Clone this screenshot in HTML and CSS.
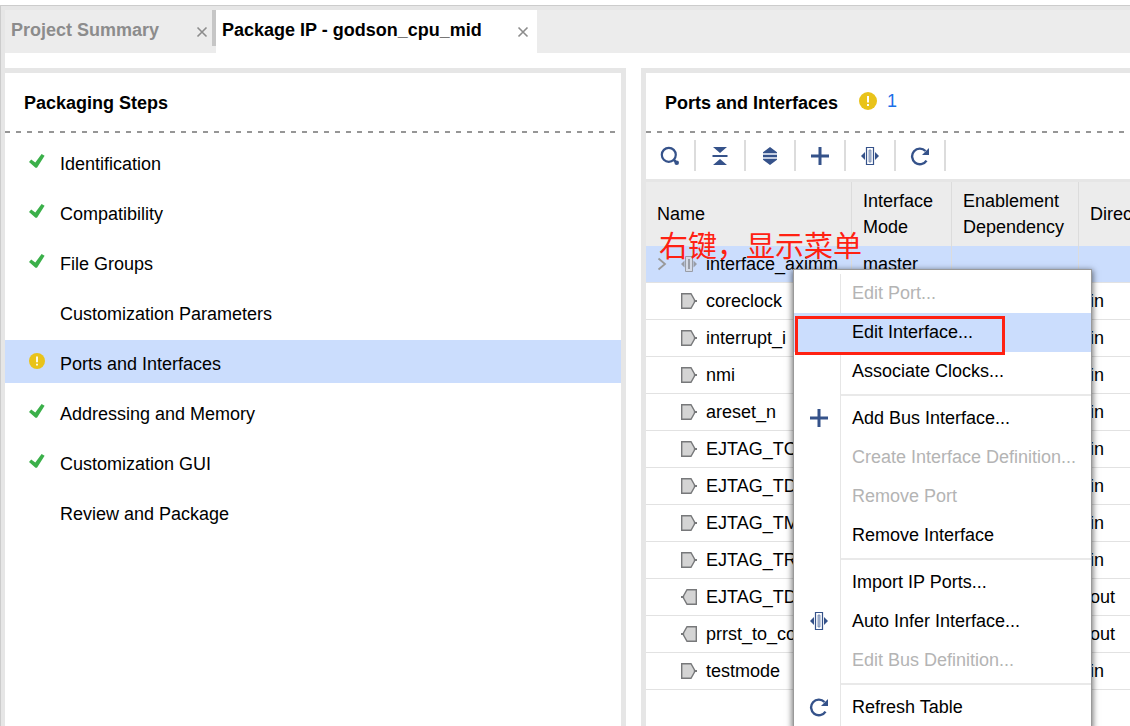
FILE: index.html
```html
<!DOCTYPE html>
<html lang="en">
<head>
<meta charset="utf-8">
<title>Package IP - godson_cpu_mid</title>
<link rel="stylesheet" href="styles.css">
</head>
<body>
<svg class="sprite" aria-hidden="true">
  <symbol id="check" viewBox="0 0 16 16"><path d="M0 9l2.200-2.400L6.300 9.500 12.600 1 15.600 2.800 8 14.800 6.500 14.800z" fill="#3bb04a"/></symbol>
  <symbol id="warn" viewBox="0 0 18 18"><circle cx="9" cy="9" r="9" fill="#e9c31a"/><path d="M8 4h2v6.500H8zM8 12h2v2H8z" fill="#fff"/></symbol>
  <symbol id="close" viewBox="0 0 12 12"><path d="M1.500 1.500l9 9M10.500 1.500l-9 9" stroke="#8c8c8c" stroke-width="1.600" fill="none"/></symbol>
  <symbol id="search" viewBox="0 0 20 20"><circle cx="8.800" cy="8.800" r="7" fill="none" stroke="#35528a" stroke-width="2.200"/><path d="M14 14l1.500 1.500" stroke="#35528a" stroke-width="2.500"/><circle cx="16.700" cy="16.700" r="2.300" fill="#35528a"/></symbol>
  <symbol id="collapse" viewBox="0 0 20 20"><path d="M3 1h14l-7 6zM3 19h14l-7-6zM2.500 9h15v2h-15z" fill="#35528a"/></symbol>
  <symbol id="expand" viewBox="0 0 20 20"><path d="M3 7h14v2H3zM3 11h14v2H3z" fill="#c3cde0"/><path d="M3 7h14v-.8L10 1 3 6.200zM3 13h14v.8L10 19l-7-5.200zM3 9h14v2H3z" fill="#35528a"/></symbol>
  <symbol id="plus" viewBox="0 0 20 20"><path d="M8.500 1h3v7.500H19v3h-7.500V19h-3v-7.500H1v-3h7.500z" fill="#35528a"/></symbol>
  <symbol id="bus" viewBox="0 0 20 20"><path d="M6.500 1.500h7v17h-7z" fill="#fff" stroke="#35528a" stroke-width="1.200"/><path d="M9 4h2v12H9z" fill="#b4c0d8" stroke="#6f85ae" stroke-width=".8"/><path d="M5 6v8l-4-4zM15 6v8l4-4z" fill="#35528a"/></symbol>
  <symbol id="bus-row" viewBox="0 0 16 16"><path d="M4.500.500h7v15h-7z" fill="#d4dae6" stroke="#999da6"/><path d="M8 3v10" stroke="#999da6" stroke-width="2"/><path d="M3.500 4.500v7L0 8zM12.500 4.500v7L16 8z" fill="#999da6"/></symbol>
  <symbol id="refresh" viewBox="0 0 20 20"><path d="M16.500 14.600A7.800 7.800 0 1 1 15.500 5" fill="none" stroke="#35528a" stroke-width="2.400"/><path d="M19 2v7h-7z" fill="#35528a"/></symbol>
  <symbol id="chevron" viewBox="0 0 10 14"><path d="M1.500 1.500L8 7l-6.500 5.500" fill="none" stroke="#999" stroke-width="1.800"/></symbol>
  <symbol id="port-in" viewBox="0 0 16 16"><path d="M.7.700H10L13.500 7v2L10 15.300H.7z" fill="#d4d4d4" stroke="#77787a" stroke-width="1.400"/><path d="M13.500 8H16" stroke="#77787a" stroke-width="2"/></symbol>
  <symbol id="port-out" viewBox="0 0 16 16"><path d="M15.300.700H6L2.500 7v2L6 15.300h9.300z" fill="#d4d4d4" stroke="#77787a" stroke-width="1.400"/><path d="M2.500 8H0" stroke="#77787a" stroke-width="2"/></symbol>
</svg>
<div class="app">
  <nav class="tabs" aria-label="Documents">
    <div class="tab"><button class="tab-name">Project Summary</button><button class="tab-close" aria-label="Close Project Summary"><svg class="i12"><use href="#close"/></svg></button></div>
    <div class="tab active"><button class="tab-name">Package IP - godson_cpu_mid</button><button class="tab-close" aria-label="Close Package IP"><svg class="i12"><use href="#close"/></svg></button></div>
  </nav>
  <main class="work">
    <section class="panel steps-panel">
      <header class="panel-head"><h2>Packaging Steps</h2></header>
      <ul class="steps">
        <li><button class="step"><svg class="i16"><use href="#check"/></svg><span>Identification</span></button></li>
        <li><button class="step"><svg class="i16"><use href="#check"/></svg><span>Compatibility</span></button></li>
        <li><button class="step"><svg class="i16"><use href="#check"/></svg><span>File Groups</span></button></li>
        <li><button class="step"><svg class="i16"></svg><span>Customization Parameters</span></button></li>
        <li><button class="step current" aria-current="step"><svg class="i16"><use href="#warn"/></svg><span>Ports and Interfaces</span></button></li>
        <li><button class="step"><svg class="i16"><use href="#check"/></svg><span>Addressing and Memory</span></button></li>
        <li><button class="step"><svg class="i16"><use href="#check"/></svg><span>Customization GUI</span></button></li>
        <li><button class="step"><svg class="i16"></svg><span>Review and Package</span></button></li>
      </ul>
    </section>
    <section class="panel ports-panel">
      <header class="panel-head"><h2>Ports and Interfaces</h2><a class="warnings" href="#warnings"><svg class="i18"><use href="#warn"/></svg>1</a></header>
      <div class="toolbar">
        <button class="tool" aria-label="Search"><svg class="i20"><use href="#search"/></svg></button>
        <button class="tool" aria-label="Collapse all"><svg class="i20"><use href="#collapse"/></svg></button>
        <button class="tool" aria-label="Expand all"><svg class="i20"><use href="#expand"/></svg></button>
        <button class="tool" aria-label="Add"><svg class="i20"><use href="#plus"/></svg></button>
        <button class="tool" aria-label="Auto infer interface"><svg class="i20"><use href="#bus"/></svg></button>
        <button class="tool" aria-label="Refresh"><svg class="i20"><use href="#refresh"/></svg></button>
      </div>
      <div class="table-wrap">
        <table class="ports">
          <colgroup><col class="c-name"><col class="c-mode"><col class="c-dep"><col class="c-dir"></colgroup>
          <thead><tr><th>Name</th><th>Interface Mode</th><th>Enablement Dependency</th><th>Direction</th></tr></thead>
          <tbody>
            <tr class="selected"><td><span class="name"><svg class="chev"><use href="#chevron"/></svg><svg class="i16"><use href="#bus-row"/></svg>interface_aximm</span></td><td>master</td><td></td><td></td></tr>
            <tr><td><span class="name"><svg class="chev"></svg><svg class="i16"><use href="#port-in"/></svg>coreclock</span></td><td></td><td></td><td>in</td></tr>
            <tr><td><span class="name"><svg class="chev"></svg><svg class="i16"><use href="#port-in"/></svg>interrupt_i</span></td><td></td><td></td><td>in</td></tr>
            <tr><td><span class="name"><svg class="chev"></svg><svg class="i16"><use href="#port-in"/></svg>nmi</span></td><td></td><td></td><td>in</td></tr>
            <tr><td><span class="name"><svg class="chev"></svg><svg class="i16"><use href="#port-in"/></svg>areset_n</span></td><td></td><td></td><td>in</td></tr>
            <tr><td><span class="name"><svg class="chev"></svg><svg class="i16"><use href="#port-in"/></svg>EJTAG_TCK</span></td><td></td><td></td><td>in</td></tr>
            <tr><td><span class="name"><svg class="chev"></svg><svg class="i16"><use href="#port-in"/></svg>EJTAG_TDI</span></td><td></td><td></td><td>in</td></tr>
            <tr><td><span class="name"><svg class="chev"></svg><svg class="i16"><use href="#port-in"/></svg>EJTAG_TMS</span></td><td></td><td></td><td>in</td></tr>
            <tr><td><span class="name"><svg class="chev"></svg><svg class="i16"><use href="#port-in"/></svg>EJTAG_TRST</span></td><td></td><td></td><td>in</td></tr>
            <tr><td><span class="name"><svg class="chev"></svg><svg class="i16"><use href="#port-out"/></svg>EJTAG_TDO</span></td><td></td><td></td><td>out</td></tr>
            <tr><td><span class="name"><svg class="chev"></svg><svg class="i16"><use href="#port-out"/></svg>prrst_to_core</span></td><td></td><td></td><td>out</td></tr>
            <tr><td><span class="name"><svg class="chev"></svg><svg class="i16"><use href="#port-in"/></svg>testmode</span></td><td></td><td></td><td>in</td></tr>
          </tbody>
        </table>
      </div>
      <div class="menu" role="menu">
        <div class="menu-body">
          <div class="group">
            <button class="item" role="menuitem" disabled><span class="label">Edit Port...</span></button>
            <button class="item hover" role="menuitem"><span class="label">Edit Interface...</span></button>
            <button class="item" role="menuitem"><span class="label">Associate Clocks...</span></button>
          </div>
          <div class="group">
            <button class="item" role="menuitem"><svg class="i20"><use href="#plus"/></svg><span class="label">Add Bus Interface...</span></button>
            <button class="item" role="menuitem" disabled><span class="label">Create Interface Definition...</span></button>
            <button class="item" role="menuitem" disabled><span class="label">Remove Port</span></button>
            <button class="item" role="menuitem"><span class="label">Remove Interface</span></button>
          </div>
          <div class="group">
            <button class="item" role="menuitem"><span class="label">Import IP Ports...</span></button>
            <button class="item" role="menuitem"><svg class="i20"><use href="#bus"/></svg><span class="label">Auto Infer Interface...</span></button>
            <button class="item" role="menuitem" disabled><span class="label">Edit Bus Definition...</span></button>
          </div>
          <div class="group">
            <button class="item" role="menuitem"><svg class="i20"><use href="#refresh"/></svg><span class="label">Refresh Table</span></button>
          </div>
        </div>
        <div class="callout"></div>
      </div>
      <p class="note" lang="zh">右键，显示菜单</p>
    </section>
  </main>
</div>
</body>
</html>
```
FILE: styles.css
```css
* { box-sizing: border-box; }

body {
  margin: 0;
  background: #fff;
  color: #000;
  font: 18px/26px "Liberation Sans", Arial, sans-serif;
}

button {
  margin: 0;
  padding: 0;
  border: 0;
  background: none;
  color: inherit;
  font: inherit;
  text-align: left;
}

svg { display: block; flex: none; }
.sprite { position: absolute; width: 0; height: 0; }
.i12 { width: 12px; height: 12px; }
.i16 { width: 16px; height: 16px; }
.i18 { width: 18px; height: 18px; }
.i20 { width: 20px; height: 20px; }
.chev { width: 10px; height: 14px; }

.app {
  display: flex;
  flex-direction: column;
  height: 100vh;
  padding-top: 5px;
  overflow: hidden;
}

/* Document tabs */
.tabs {
  display: flex;
  flex: none;
  height: 48px;
  border-top: 1px solid #ccc;
  border-left: 1px solid #ccc;
  background: #ececec;
  box-shadow: inset 4px 4px #e6e6e6;
  padding: 4px 0 0 4px;
}

.tab {
  display: flex;
  align-items: center;
  padding: 0 8px 3px 6px;
  color: #8c8c8c;
  font-weight: bold;
}

.tab:first-child {
  gap: 37px;
  border-right: 4px solid #c6c6c6;
  margin-bottom: 7px;
  padding: 4px 4px 0 6px;
}

.tab.active { gap: 35px; background: #fff; color: #000; }
.tab-close { padding-top: 4px; }

/* Work area */
.work {
  display: grid;
  grid-template-columns: 625fr 489fr;
  gap: 15px;
  flex: 1;
  min-height: 0;
  padding-top: 15px;
  border-left: 1px solid #ccc;
  box-shadow: inset 4px 0 #e6e6e6;
}

.panel {
  display: flex;
  flex-direction: column;
  min-width: 0;
  border-top: 5px solid #e6e6e6;
}

.steps-panel { margin-left: 4px; border-right: 5px solid #e6e6e6; }
.ports-panel { position: relative; border-left: 5px solid #e6e6e6; }

.panel-head {
  display: flex;
  align-items: center;
  flex: none;
  gap: 21px;
  height: 60px;
  padding: 0 19px;
  background: repeating-linear-gradient(90deg, #969696 0 5px, transparent 5px 11px) left bottom / 100% 2px no-repeat;
}

.steps-panel .panel-head { background-size: calc(100% - 5px) 2px; }

h2 { margin: 0; font: inherit; font-weight: bold; }

.warnings {
  display: flex;
  align-items: center;
  gap: 10px;
  padding-bottom: 5px;
  color: #1a6fe8;
  text-decoration: none;
}

.steps {
  display: flex;
  flex-direction: column;
  gap: 7px;
  margin: 0;
  padding: 7px 0 0;
  list-style: none;
}

.step {
  display: flex;
  align-items: center;
  gap: 15px;
  width: 100%;
  height: 43px;
  padding: 4px 24px 0;
}

.step svg { margin-bottom: 5px; }
.current, .selected, .hover { background: #cbddfd; }

/* Ports toolbar and table */
.toolbar { display: flex; flex: none; height: 46px; padding: 7px 0 8px; }

.tool {
  display: flex;
  align-items: center;
  justify-content: center;
  width: 50px;
  border-right: 2px solid #dcdcdc;
}

.table-wrap { border-top: 3px solid #e6e6e6; overflow: hidden; }
.ports { width: 540px; border-collapse: separate; border-spacing: 0; table-layout: fixed; }
.c-name { width: 206px; }
.c-mode { width: 100px; }
.c-dep { width: 127px; }

th {
  height: 64px;
  padding: 0 11px 1px;
  border-right: 1px solid #dcdcdc;
  background: #ececec;
  font-weight: normal;
  text-align: left;
}

td {
  height: 37px;
  padding: 0 11px;
  border-bottom: 1px solid #e2e2e2;
  white-space: nowrap;
}

.selected td { border-right: 1px solid #dcdcdc; }
.name { display: flex; align-items: center; }
.name .i16 { margin: 0 9px 0 14px; }

/* Context menu */
.menu {
  position: absolute;
  top: 196px;
  left: 147px;
  width: 299px;
  padding-top: 4px;
  border: 1px solid #999;
  background: #fff;
  box-shadow: 0 2px 6px 1px rgba(0, 0, 0, .55);
}

.menu-body { background: linear-gradient(#e6e6e6, #e6e6e6) 46px 0 / 1px 100% no-repeat; }

.group + .group {
  margin-top: 3px;
  padding-top: 5px;
  background: linear-gradient(#e9e9e9, #e9e9e9) 47px 0 / 100% 2px no-repeat;
}

.item {
  display: grid;
  grid-template-columns: 58px 1fr;
  align-items: center;
  width: 100%;
  height: 39px;
  padding-bottom: 2px;
}

.item svg { margin-left: 15px; }
.label { grid-column: 2; }
.item:disabled { color: #b4b4b4; }

/* Annotations */
.callout {
  position: absolute;
  top: 46px;
  left: 1px;
  width: 210px;
  height: 39px;
  border: 3px solid #ff2112;
}

.note {
  position: absolute;
  top: 151px;
  left: 13px;
  margin: 0;
  color: #ff2112;
  font: 29px/40px "Noto Sans CJK SC", sans-serif;
  white-space: nowrap;
}
```
